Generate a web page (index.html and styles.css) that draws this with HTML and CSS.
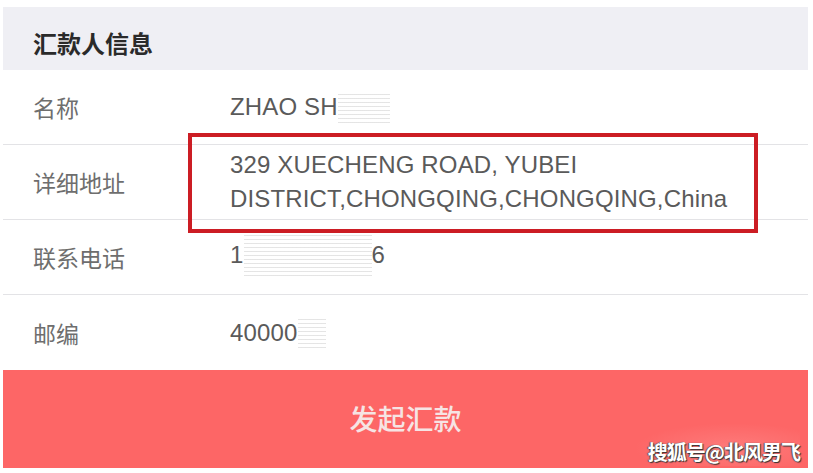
FILE: index.html
```html
<!DOCTYPE html>
<html lang="zh-CN">
<head>
    <meta charset="UTF-8">
    <meta name="viewport" content="width=device-width, initial-scale=1.0">
    <title>汇款人信息</title>
    <link rel="stylesheet" href="styles.css">
</head>
<body>
    <div class="page">
        <div class="section-title">汇款人信息</div>

        <div class="info-list">
            <div class="row">
                <div class="label">名称</div>
                <div class="value">ZHAO SH<span class="smear smear-name"></span></div>
            </div>
            <div class="row">
                <div class="label">详细地址</div>
                <div class="value">329 XUECHENG ROAD, YUBEI<br>DISTRICT,CHONGQING,CHONGQING,China</div>
            </div>
            <div class="row">
                <div class="label">联系电话</div>
                <div class="value">1<span class="smear smear-phone"></span>6</div>
            </div>
            <div class="row">
                <div class="label">邮编</div>
                <div class="value">40000<span class="smear smear-zip"></span></div>
            </div>
        </div>

        <button class="submit-btn">发起汇款</button>

        <div class="highlight"></div>
        <div class="watermark">搜狐号@北风男飞</div>
    </div>
</body>
</html>
```

FILE: styles.css
```css
body {
    margin: 0;
    padding: 0;
    background: #fff;
    font-family: "Liberation Sans", "Noto Sans CJK SC", sans-serif;
}

.page {
    position: relative;
    width: 805px;
    height: 473px;
    margin-left: 3px;
    padding-top: 7px;
    box-sizing: border-box;
}

.section-title {
    height: 63px;
    background: #efeff4;
    padding-left: 30px;
    padding-top: 8px;
    display: flex;
    align-items: center;
    box-sizing: border-box;
    font-family: "Noto Sans CJK SC", sans-serif;
    font-size: 24px;
    font-weight: 700;
    color: #2a2a2a;
}

.info-list {
    background: #fff;
}

.row {
    display: flex;
    align-items: center;
    height: 75px;
    border-bottom: 1px solid #e3e3e6;
    box-sizing: border-box;
}

.row:last-child {
    border-bottom: none;
}

.label {
    width: 227px;
    padding-left: 30px;
    box-sizing: border-box;
    font-family: "Noto Sans CJK SC", sans-serif;
    font-size: 23px;
    color: #6e6e6e;
}

.value {
    position: relative;
    font-size: 24px;
    line-height: 34px;
    letter-spacing: 0.15px;
    color: #5a5a5a;
}

/* blurred-out parts of the personal data */
.smear {
    display: inline-block;
    vertical-align: middle;
    height: 30px;
    background: repeating-linear-gradient(to bottom, rgba(150, 150, 150, 0.25) 0 1px, transparent 1px 4px);
    filter: blur(0.6px);
}

.smear-name {
    width: 52px;
}

.smear-phone {
    width: 128px;
    height: 44px;
}

.smear-zip {
    width: 28px;
}

.submit-btn {
    display: block;
    width: 100%;
    height: 98px;
    border: none;
    background: #fd6666;
    color: #f6e4e4;
    font-family: "Noto Sans CJK SC", sans-serif;
    font-size: 28px;
    font-weight: 500;
    padding-bottom: 4px;
}

.highlight {
    position: absolute;
    left: 185px;
    top: 133px;
    width: 570px;
    height: 100px;
    border: 4px solid #cc1d24;
    box-sizing: border-box;
}

.watermark {
    position: absolute;
    right: 8px;
    bottom: 7px;
    padding: 14px 0 0 14px;
    background: radial-gradient(ellipse at 60% 60%, rgba(255, 150, 150, 0.45), transparent 70%);
    font-family: "Noto Sans CJK SC", sans-serif;
    font-size: 20px;
    font-weight: 700;
    letter-spacing: -1px;
    color: #fff;
    text-shadow: 1px 1px 1px #333, -1px 0 1px #555;
}
```
